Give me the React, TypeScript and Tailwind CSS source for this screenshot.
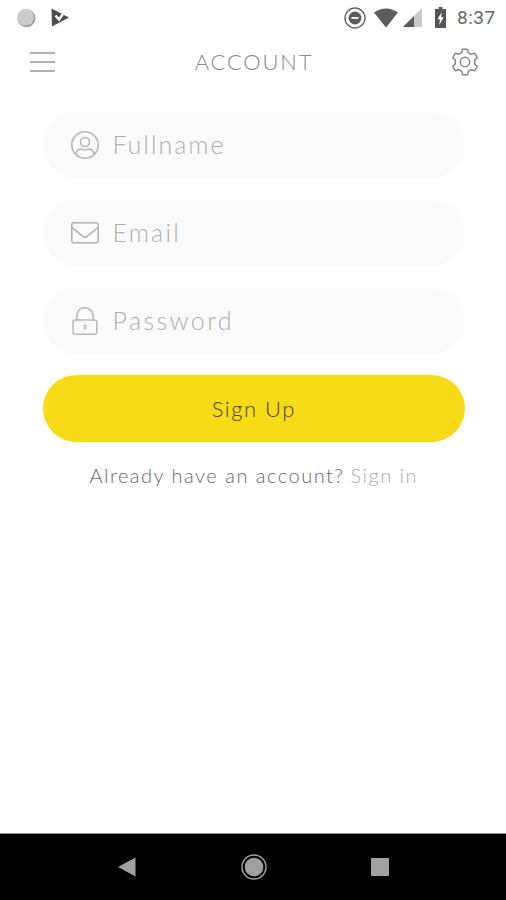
import type { ReactNode } from 'react';

type FieldProps = {
  icon: ReactNode;
  label: string;
  tracking: string;
};

const StatusBar = () => (
  <div className="flex h-[35px] items-center pl-4 pr-[10px]">
    <svg className="h-5 w-5" viewBox="0 0 20 20">
      <circle cx="10.4" cy="10.2" r="9" fill="#9a9a9a" />
      <circle cx="9.6" cy="9.2" r="8.4" fill="#cbcbcb" />
    </svg>
    <svg className="ml-[15px] h-5 w-[19px]" viewBox="0 0 19 20">
      <path d="M0.5 0.5 18 9.5 1 18.5Z" fill="#4d4d4d" />
      <path d="M4.5 7.5 8 11.5 14.5 2.5" fill="none" stroke="#fff" strokeWidth="2.4" />
    </svg>
    <svg className="ml-auto h-[22px] w-[22px]" viewBox="0 0 22 22">
      <circle cx="11" cy="11" r="10" fill="none" stroke="#666" strokeWidth="1.4" />
      <circle cx="11" cy="11" r="6.4" fill="#5c5c5c" />
      <path d="M7.5 11h7" stroke="#fff" strokeWidth="1.8" />
    </svg>
    <svg className="ml-2 h-5 w-6" viewBox="0 0 24 20">
      <path d="M0 4.5Q12-3.5 24 4.5L12 19.5Z" fill="#5c5c5c" />
    </svg>
    <svg className="ml-[5px] h-[19px] w-[19px]" viewBox="0 0 19 19">
      <path d="M19 0V19H0Z" fill="#c9c9c9" />
      <path d="M11 8V19H0Z" fill="#5c5c5c" />
    </svg>
    <svg className="ml-[13px] h-[21px] w-[11px]" viewBox="0 0 12 21" preserveAspectRatio="none">
      <path d="M4 0h4v2h4v19H0V2h4Z" fill="#555" />
      <path d="M7.4 5 2.7 12.2h2.7L4.6 18l4.8-7.7H6.6Z" fill="#fff" />
    </svg>
    <span className="ml-[11px] w-[39px] whitespace-nowrap font-['Roboto',sans-serif] text-[19px] font-normal leading-5 tracking-[0.5px] text-[#666]">
      8:37
    </span>
  </div>
);

const Header = () => (
  <header className="flex h-[54px] items-center justify-between pl-[30px] pr-[27px]">
    <button className="flex w-[27px] flex-col gap-[7px]" aria-label="Menu">
      <span className="h-0.5 w-[25px] bg-[#b0b0b0]" />
      <span className="h-0.5 w-[25px] bg-[#b0b0b0]" />
      <span className="h-0.5 w-[25px] bg-[#b0b0b0]" />
    </button>
    <h1 className="text-[22px] leading-7 tracking-[1.8px] text-[#888]">ACCOUNT</h1>
    <button aria-label="Settings">
      <svg
        className="h-7 w-7"
        viewBox="0 0 28 28"
        fill="none"
        stroke="#888"
        strokeWidth="1.5"
        strokeLinejoin="round"
      >
        <path d="M11.5 1.2h5l.8 3.5 2.8 1.6 3.5-1.1 2.7 4.4-2.6 2.4v4l2.6 2.4-2.7 4.4-3.5-1.1-2.8 1.6-.8 3.5h-5l-.8-3.5-2.8-1.6-3.5 1.1-2.7-4.4L4.3 16v-4L1.7 9.6l2.7-4.4 3.5 1.1 2.8-1.6Z" />
        <circle cx="14" cy="14" r="4.7" />
      </svg>
    </button>
  </header>
);

const UserIcon = () => (
  <svg className="h-7 w-7" viewBox="0 0 28 28" fill="none" stroke="#b8b8b8" strokeWidth="1.6">
    <circle cx="14" cy="14" r="13.2" />
    <circle cx="14" cy="11" r="4.5" />
    <path d="M4.8 23.3C5.5 19.3 8.5 18 11 18.2Q14 19.3 17 18.2C19.5 18 22.5 19.3 23.2 23.3" />
  </svg>
);

const MailIcon = () => (
  <svg className="h-7 w-7" viewBox="0 0 28 28" fill="none" stroke="#b0b0b0" strokeWidth="1.5">
    <rect x="0.8" y="3.8" width="26.4" height="20" rx="2" />
    <path d="M1 8.5 12 17.4Q14 19 16 17.4L27 8.5" />
  </svg>
);

const LockIcon = () => (
  <svg className="h-7 w-7" viewBox="0 0 28 28" fill="none" stroke="#b8b8b8" strokeWidth="1.5">
    <path d="M5.8 13V8.9a8.2 8.2 0 0 1 16.4 0V13" />
    <rect x="2" y="13" width="23.8" height="14.2" rx="2" />
    <path d="M14 17.5v5" stroke="#c4c4c4" strokeWidth="3" />
  </svg>
);

const Field = ({ icon, label, tracking }: FieldProps) => (
  <div className="flex h-[66px] items-center rounded-full bg-[#fafafa] pl-[28.5px]">
    {icon}
    <span className={`ml-[13.5px] text-[25px] text-[#b0b0b0] ${tracking}`}>{label}</span>
  </div>
);

const NavBar = () => (
  <nav className="flex h-[67px] items-center justify-between border-t border-[#999] bg-black pl-[118px] pr-[117px]">
    <svg className="h-5 w-[18px]" viewBox="0 0 18 20">
      <path d="M0 10 17.5 0.5V19.5Z" fill="#a0a0a0" />
    </svg>
    <svg className="h-[26px] w-[26px]" viewBox="0 0 26 26">
      <circle cx="13" cy="13" r="12" fill="none" stroke="#a0a0a0" strokeWidth="1.5" />
      <circle cx="13" cy="13" r="9.3" fill="#a0a0a0" />
    </svg>
    <span className="h-[18px] w-[18px] bg-[#a0a0a0]" />
  </nav>
);

const App = () => (
  <div className="flex h-screen w-full flex-col bg-white font-['Lato',sans-serif] font-light">
    <StatusBar />
    <Header />
    <main className="flex-1 pl-[42.5px] pr-[41px] pt-[23px]">
      <div className="flex flex-col gap-[22px]">
        <Field icon={<UserIcon />} label="Fullname" tracking="tracking-[2px]" />
        <Field icon={<MailIcon />} label="Email" tracking="tracking-[2.2px]" />
        <Field icon={<LockIcon />} label="Password" tracking="tracking-[2.4px]" />
        <button className="-mt-px h-[67px] rounded-full bg-[#f6db16] text-[22px] tracking-[1.5px] text-[#4b4520]">
          Sign Up
        </button>
      </div>
      <p className="mt-[19px] whitespace-nowrap text-center text-[20px] leading-7 tracking-[1.5px] text-[#666]">
        Already have an account? <a className="-ml-px text-[#aaa]">Sign in</a>
      </p>
    </main>
    <NavBar />
  </div>
);

export default App;
